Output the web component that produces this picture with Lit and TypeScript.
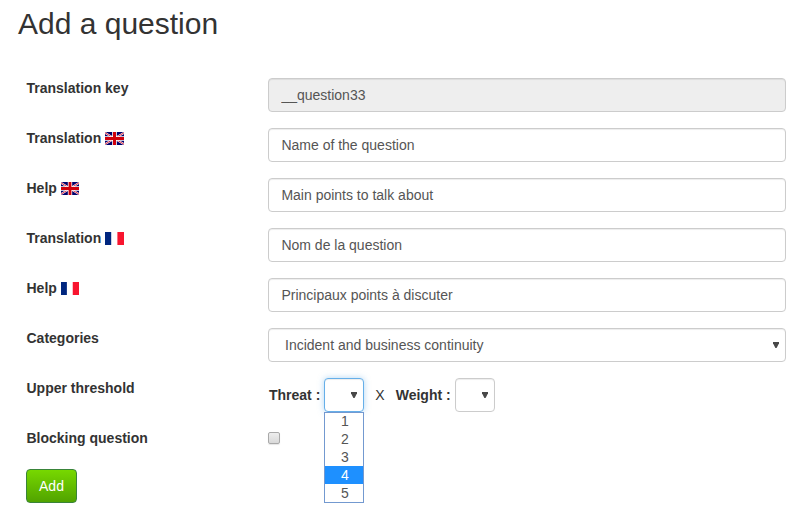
import { LitElement, html, svg, css, nothing } from "lit";
import { customElement, property, state } from "lit/decorators.js";
import { classMap } from "lit/directives/class-map.js";

@customElement("country-flag")
class CountryFlag extends LitElement {
  @property() country = "gb";

  static styles = css`
    :host { display: block; width: 19px; height: 13px; }
    :host([narrow]) { width: 18px; }
    svg { display: block; width: 100%; height: 100%; }
  `;

  render() {
    const shapes = this.country === "gb"
      ? svg`
        <rect width="19" height="13" fill="#00006b"/>
        <path d="M0 0.8L19 12.2M19 0.8L0 12.2" stroke="#fff" stroke-width="1.9"/>
        <path d="M0 0.8L19 12.2M19 0.8L0 12.2" stroke="#d8102a" stroke-width="0.9"/>
        <path d="M9.5 0V13M0 6.5H19" stroke="#fff" stroke-width="4.6"/>
        <path d="M9.5 0V13M0 6.5H19" stroke="#d0000c" stroke-width="3"/>`
      : svg`
        <rect width="19" height="13" fill="#fff"/>
        <rect width="6.2" height="13" fill="#00267f"/>
        <rect x="12.4" width="6.6" height="13" fill="#f8152f"/>`;
    return html`<svg viewBox="0 0 19 13" preserveAspectRatio="none">${shapes}</svg>`;
  }
}

@customElement("drop-select")
class DropSelect extends LitElement {
  @property() value = "";
  @property({ type: Boolean }) open = false;
  @property({ type: Array }) options: number[] = [];
  @property({ type: Number }) active = 0;

  static styles = css`
    :host { display: block; position: relative; }
    .control {
      box-sizing: border-box; height: 34px; display: flex; align-items: center;
      justify-content: space-between; padding: 0 6px 0 16px;
      border: 1px solid #ccc; border-radius: 4px; background: #fff;
      box-shadow: inset 0 1px 1px rgba(0, 0, 0, 0.075);
    }
    .focused {
      border-color: #66afe9;
      box-shadow: inset 0 1px 1px rgba(0, 0, 0, 0.075), 0 0 6px rgba(102, 175, 233, 0.5);
    }
    .arrow { flex: none; width: 6px; height: 6px; margin-left: auto; margin-top: -1px; }
    .menu {
      position: absolute; top: 34px; left: 0; right: 0; height: 91px;
      box-sizing: border-box; border: 1px solid #7399d0; background: #fff;
    }
    .option { height: 18px; line-height: 18px; text-align: center; padding-left: 1px; }
    .option:first-child { margin-top: -1px; }
    .active { background: #1e90ff; color: #fff; }
  `;

  render() {
    return html`
      <div class=${classMap({ control: true, focused: this.open })}>
        ${this.value ? html`<span>${this.value}</span>` : nothing}
        <svg class="arrow" viewBox="0 0 6 6"><path d="M0 0H6V1.2L3.6 6H2.4L0 1.2Z" fill="#484848"/></svg>
      </div>
      ${this.open
        ? html`<div class="menu">
            ${this.options.map((n) => html`<div class=${classMap({ option: true, active: n === this.active })}>${n}</div>`)}
          </div>`
        : nothing}
    `;
  }
}

interface TextRow {
  label: string;
  value: string;
  flag?: string;
  disabled?: boolean;
}

@customElement("app-root")
class AppRoot extends LitElement {
  @state() private rows: TextRow[] = [
    { label: "Translation key", value: "__question33", disabled: true },
    { label: "Translation", value: "Name of the question", flag: "gb" },
    { label: "Help", value: "Main points to talk about", flag: "gb" },
    { label: "Translation", value: "Nom de la question", flag: "fr" },
    { label: "Help", value: "Principaux points à discuter", flag: "fr" },
  ];

  static styles = css`
    :host {
      display: block; box-sizing: border-box; height: 527px; padding: 7px 18px 0;
      background: #fff; color: #333; overflow: hidden;
      font: 14px/20px "Liberation Sans", Arial, sans-serif;
    }
    h1 { margin: 0 0 38px; font-size: 30px; line-height: 33px; font-weight: 400; }
    .row { display: grid; grid-template-columns: 250px 1fr; height: 34px; margin-bottom: 16px; }
    .label { display: flex; align-items: flex-start; padding-left: 8.5px; font-weight: 700; }
    country-flag { margin: 4px 0 0 3.6px; }
    country-flag[narrow] { margin-left: 4.4px; }
    .input {
      box-sizing: border-box; width: 100%; height: 34px; padding: 6px 12px 6px 12.4px;
      border: 1px solid #ccc; border-radius: 4px; background: #fff;
      color: #555; font: inherit; outline: none;
      box-shadow: inset 0 1px 1px rgba(0, 0, 0, 0.075);
    }
    .input:disabled { background: #eee; }
    drop-select { color: #555; }
    .small { width: 40px; }
    .threshold { display: flex; align-items: center; padding-left: 1px; }
    .threshold b { margin-right: 4px; }
    .times { margin: 0 11px; }
    .check {
      appearance: none; box-sizing: border-box; width: 12px; height: 12px; margin: 4px 0 0;
      border: 1px solid #a9a9a9; border-radius: 2px;
      background: linear-gradient(#eee, #d9d9d9);
      box-shadow: 0 1px 1px rgba(0, 0, 0, 0.1);
    }
    .add {
      display: block; box-sizing: border-box; width: 51px; height: 34px; margin: -9px 0 0 8px;
      padding: 0; border: 1px solid #398439; border-radius: 4px; color: #fff; font: inherit;
      background: linear-gradient(#77d800, #51a300);
    }
  `;

  render() {
    return html`
      <h1>Add a question</h1>
      ${this.rows.map((r) => html`
        <div class="row">
          <div class="label">${r.label}${r.flag
            ? html`<country-flag country=${r.flag} ?narrow=${r.label === "Help"}></country-flag>`
            : nothing}</div>
          <input class="input" type="text" .value=${r.value} ?disabled=${r.disabled ?? false} />
        </div>`)}
      <div class="row">
        <div class="label">Categories</div>
        <drop-select value="Incident and business continuity"></drop-select>
      </div>
      <div class="row">
        <div class="label">Upper threshold</div>
        <div class="threshold">
          <b>Threat :</b>
          <drop-select class="small" open .options=${[1, 2, 3, 4, 5]} .active=${4}></drop-select>
          <span class="times">X</span>
          <b>Weight :</b>
          <drop-select class="small"></drop-select>
        </div>
      </div>
      <div class="row">
        <div class="label">Blocking question</div>
        <input class="check" type="checkbox" />
      </div>
      <button class="add">Add</button>
    `;
  }
}
